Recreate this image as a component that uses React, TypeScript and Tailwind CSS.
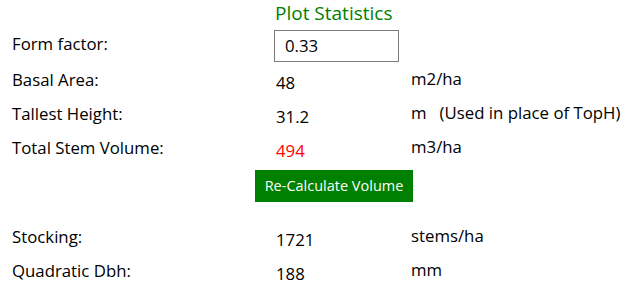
import React from 'react'

const rows1 = [
  { label: 'Basal Area:', value: '48', unit: 'm2/ha' },
  { label: 'Tallest Height:', value: '31.2', unit: 'm\u00a0\u00a0\u00a0(Used in place of TopH)' },
  { label: 'Total Stem Volume:', value: '494', unit: 'm3/ha', red: true },
]

const rows2 = [
  { label: 'Stocking:', value: '1721', unit: 'stems/ha' },
  { label: 'Quadratic Dbh:', value: '188', unit: 'mm' },
]

function StatRow({ label, value, unit, red }: { label: string; value: string; unit: string; red?: boolean }) {
  return (
    <div className="grid h-[34px] grid-cols-[264px_135px_1fr] items-start">
      <span className="pt-[2px] leading-[22px]">{label}</span>
      <span className={`pt-[5px] leading-[22px] ${red ? 'text-[#ff0000]' : ''}`}>{value}</span>
      <span className="pt-[1px] leading-[22px]">{unit}</span>
    </div>
  )
}

export default function App() {
  return (
    <div className="h-[290px] w-[640px] bg-white pl-[12px] font-['Open_Sans',sans-serif] text-[16.8px] text-black">
      <div className="grid h-[29px] grid-cols-[263px_1fr] items-start">
        <span />
        <span className="text-[19px] leading-[26px] text-[#008000]">Plot Statistics</span>
      </div>
      <div className="grid h-[38px] grid-cols-[262px_1fr] items-start">
        <span className="pt-[4px] leading-[22px]">Form factor:</span>
        <div className="mt-[1px] flex h-[32px] w-[125px] items-center border border-[#7a7a7a] pl-[10px]">0.33</div>
      </div>
      {rows1.map((r) => (
        <StatRow key={r.label} {...r} />
      ))}
      <div className="flex h-[55px] items-start pl-[243px] pt-[1px]">
        <button className="h-[32px] w-[158px] bg-[#008000] text-[14.5px] text-white">Re-Calculate Volume</button>
      </div>
      {rows2.map((r) => (
        <StatRow key={r.label} {...r} />
      ))}
    </div>
  )
}
